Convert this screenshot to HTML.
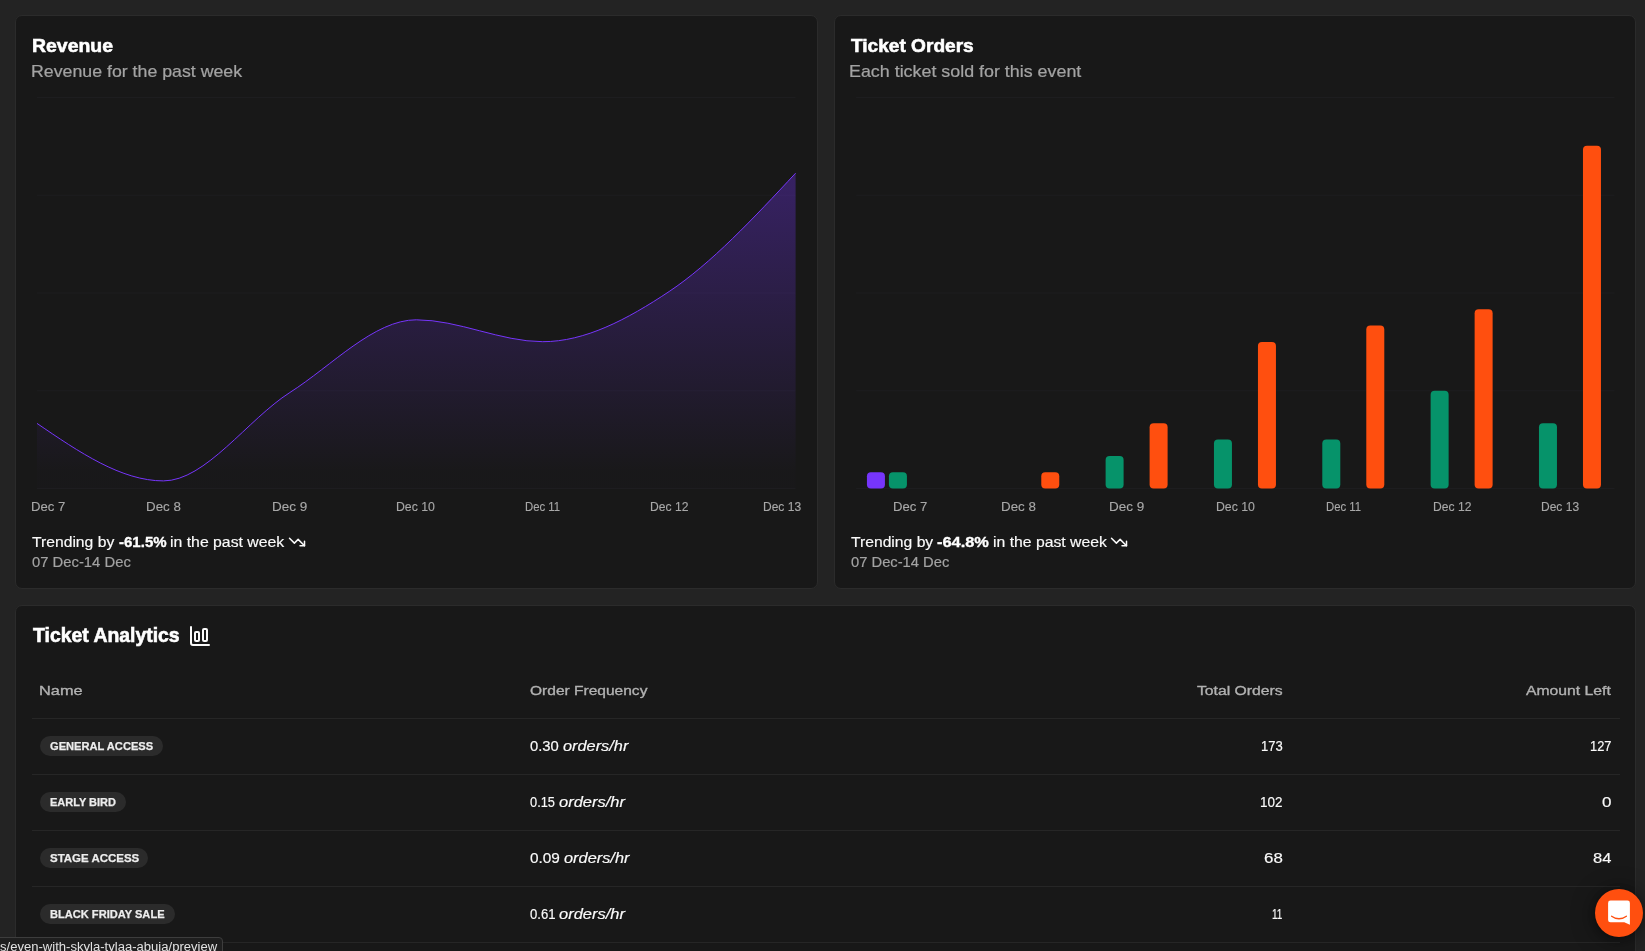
<!DOCTYPE html>
<html lang="en"><head><meta charset="utf-8"><title>Event dashboard</title>
<style>
html,body{margin:0;padding:0;background:#232323;}
body{width:1645px;height:951px;overflow:hidden;position:relative;font-family:"Liberation Sans",sans-serif;}
#app{position:absolute;left:0;top:0;width:1645px;height:951px;overflow:hidden;will-change:transform;}
.card{position:absolute;box-sizing:border-box;background:#181818;border:1px solid #2b2b2b;border-radius:7px;}
.t{position:absolute;white-space:pre;line-height:normal;transform-origin:0 0;}
.ic{position:absolute;overflow:visible}
svg.chart{position:absolute;left:0;top:0;}
.badge{position:absolute;background:#2b2b2b;border-radius:10px;}
.sep{position:absolute;left:32px;width:1587.5px;height:1px;background:#262626;}
.chat{position:absolute;left:1595px;top:889px;width:48px;height:48px;border-radius:50%;background:#ff4f0f;box-shadow:0 1px 6px rgba(0,0,0,.25),0 2px 24px rgba(0,0,0,.45);}
.status{position:absolute;left:-1px;top:936.5px;width:224px;height:20px;box-sizing:border-box;background:#1f1f1f;border:1px solid #3d3d3d;border-top-right-radius:4px;}
</style></head><body>
<div id="app">
<div class="card" style="left:15px;top:15px;width:803px;height:574px"></div>
<div class="card" style="left:834px;top:15px;width:802px;height:574px"></div>
<div class="card" style="left:15px;top:605px;width:1621px;height:420px"></div>
<svg class="chart" width="1645" height="600" viewBox="0 0 1645 600">
<defs><linearGradient id="fr" x1="0" y1="0" x2="0" y2="1"><stop offset="5%" stop-color="#7635fb" stop-opacity="0.8"/><stop offset="95%" stop-color="#7635fb" stop-opacity="0.02"/></linearGradient></defs>
<g stroke="#1d1d1f" stroke-width="1"><line x1="37" x2="795.6" y1="97.50" y2="97.50"/><line x1="37" x2="795.6" y1="195.25" y2="195.25"/><line x1="37" x2="795.6" y1="293.00" y2="293.00"/><line x1="37" x2="795.6" y1="390.75" y2="390.75"/><line x1="37" x2="795.6" y1="488.50" y2="488.50"/><line x1="856.1" x2="1614.5" y1="97.50" y2="97.50"/><line x1="856.1" x2="1614.5" y1="195.25" y2="195.25"/><line x1="856.1" x2="1614.5" y1="293.00" y2="293.00"/><line x1="856.1" x2="1614.5" y1="390.75" y2="390.75"/><line x1="856.1" x2="1614.5" y1="488.50" y2="488.50"/></g>
<path d="M37.00,423.40C79.14,452.15,121.29,480.90,163.43,480.90C205.58,480.90,247.72,419.35,289.87,392.50C332.01,365.65,374.16,319.80,416.30,319.80C458.44,319.80,500.59,341.70,542.73,341.70C584.88,341.70,627.02,319.58,669.17,291.50C711.31,263.42,753.46,218.31,795.60,173.20L795.60,488.5L37.00,488.5Z" fill="url(#fr)" fill-opacity="0.4"/>
<path d="M37.00,423.40C79.14,452.15,121.29,480.90,163.43,480.90C205.58,480.90,247.72,419.35,289.87,392.50C332.01,365.65,374.16,319.80,416.30,319.80C458.44,319.80,500.59,341.70,542.73,341.70C584.88,341.70,627.02,319.58,669.17,291.50C711.31,263.42,753.46,218.31,795.60,173.20" fill="none" stroke="#7635fb" stroke-width="1"/>
<rect x="866.93" y="472.21" width="18" height="16.29" rx="4" fill="#7635fb"/><rect x="888.93" y="472.21" width="18" height="16.29" rx="4" fill="#06936a"/><rect x="1041.27" y="472.21" width="18" height="16.29" rx="4" fill="#ff4f0f"/><rect x="1105.61" y="455.92" width="18" height="32.58" rx="4" fill="#06936a"/><rect x="1149.61" y="423.33" width="18" height="65.17" rx="4" fill="#ff4f0f"/><rect x="1213.95" y="439.62" width="18" height="48.88" rx="4" fill="#06936a"/><rect x="1257.95" y="341.88" width="18" height="146.62" rx="4" fill="#ff4f0f"/><rect x="1322.29" y="439.62" width="18" height="48.88" rx="4" fill="#06936a"/><rect x="1366.29" y="325.58" width="18" height="162.92" rx="4" fill="#ff4f0f"/><rect x="1430.63" y="390.75" width="18" height="97.75" rx="4" fill="#06936a"/><rect x="1474.63" y="309.29" width="18" height="179.21" rx="4" fill="#ff4f0f"/><rect x="1538.97" y="423.33" width="18" height="65.17" rx="4" fill="#06936a"/><rect x="1582.97" y="145.68" width="18" height="342.82" rx="4" fill="#ff4f0f"/>
</svg>
<div class="sep" style="top:717.7px"></div><div class="sep" style="top:773.8px"></div><div class="sep" style="top:829.9px"></div><div class="sep" style="top:886.0px"></div><div class="sep" style="top:942.1px"></div>
<div class="badge" style="left:40.2px;top:736.0px;width:122.7px;height:20px"></div><div class="badge" style="left:40.2px;top:792.1px;width:85.7px;height:20px"></div><div class="badge" style="left:40.2px;top:848.2px;width:108.3px;height:20px"></div><div class="badge" style="left:40.2px;top:904.3px;width:134.4px;height:20px"></div>
<span class="t" style="left:31.52px;top:36.00px;font:700 17.5px 'Liberation Sans',sans-serif;color:#ffffff;transform:scaleX(1.1097);-webkit-text-stroke:0.55px #ffffff">Revenue</span><span class="t" style="left:31.05px;top:62.20px;font:400 16.2px 'Liberation Sans',sans-serif;color:#a3a3a3;transform:scaleX(1.0963);-webkit-text-stroke:0.22px #a3a3a3">Revenue for the past week</span><span class="t" style="left:31.22px;top:499.70px;font:400 12px 'Liberation Sans',sans-serif;color:#a8a8a8;transform:scaleX(1.0931);-webkit-text-stroke:0.12px #a8a8a8">Dec 7</span><span class="t" style="left:145.56px;top:499.70px;font:400 12px 'Liberation Sans',sans-serif;color:#a8a8a8;transform:scaleX(1.1115);-webkit-text-stroke:0.12px #a8a8a8">Dec 8</span><span class="t" style="left:271.84px;top:499.70px;font:400 12px 'Liberation Sans',sans-serif;color:#a8a8a8;transform:scaleX(1.1249);-webkit-text-stroke:0.12px #a8a8a8">Dec 9</span><span class="t" style="left:396.24px;top:499.70px;font:400 12px 'Liberation Sans',sans-serif;color:#a8a8a8;transform:scaleX(1.0240);-webkit-text-stroke:0.12px #a8a8a8">Dec 10</span><span class="t" style="left:524.91px;top:499.70px;font:400 12px 'Liberation Sans',sans-serif;color:#a8a8a8;transform:scaleX(0.9461);-webkit-text-stroke:0.12px #a8a8a8">Dec 11</span><span class="t" style="left:649.55px;top:499.70px;font:400 12px 'Liberation Sans',sans-serif;color:#a8a8a8;transform:scaleX(1.0104);-webkit-text-stroke:0.12px #a8a8a8">Dec 12</span><span class="t" style="left:762.56px;top:499.70px;font:400 12px 'Liberation Sans',sans-serif;color:#a8a8a8;transform:scaleX(1.0022);-webkit-text-stroke:0.12px #a8a8a8">Dec 13</span><span class="t" style="left:32.06px;top:533.50px;font:400 14px 'Liberation Sans',sans-serif;color:#fafafa;transform:scaleX(1.1201);-webkit-text-stroke:0.16px #fafafa">Trending by</span><span class="t" style="left:118.62px;top:533.50px;font:700 14px 'Liberation Sans',sans-serif;color:#ffffff;transform:scaleX(1.0731);-webkit-text-stroke:0.3px #ffffff">-61.5%</span><span class="t" style="left:169.76px;top:533.50px;font:400 14px 'Liberation Sans',sans-serif;color:#fafafa;transform:scaleX(1.1292);-webkit-text-stroke:0.16px #fafafa">in the past week</span><span class="t" style="left:31.82px;top:553.70px;font:400 14px 'Liberation Sans',sans-serif;color:#a3a3a3;transform:scaleX(1.0579);-webkit-text-stroke:0.18px #a3a3a3">07 Dec-14 Dec</span><span class="t" style="left:851.03px;top:36.00px;font:700 17.5px 'Liberation Sans',sans-serif;color:#ffffff;transform:scaleX(1.0906);-webkit-text-stroke:0.55px #ffffff">Ticket Orders</span><span class="t" style="left:849.44px;top:62.00px;font:400 16.2px 'Liberation Sans',sans-serif;color:#a3a3a3;transform:scaleX(1.1033);-webkit-text-stroke:0.22px #a3a3a3">Each ticket sold for this event</span><span class="t" style="left:892.92px;top:499.70px;font:400 12px 'Liberation Sans',sans-serif;color:#a8a8a8;transform:scaleX(1.0931);-webkit-text-stroke:0.12px #a8a8a8">Dec 7</span><span class="t" style="left:1000.97px;top:499.70px;font:400 12px 'Liberation Sans',sans-serif;color:#a8a8a8;transform:scaleX(1.1115);-webkit-text-stroke:0.12px #a8a8a8">Dec 8</span><span class="t" style="left:1109.09px;top:499.70px;font:400 12px 'Liberation Sans',sans-serif;color:#a8a8a8;transform:scaleX(1.1249);-webkit-text-stroke:0.12px #a8a8a8">Dec 9</span><span class="t" style="left:1215.58px;top:499.70px;font:400 12px 'Liberation Sans',sans-serif;color:#a8a8a8;transform:scaleX(1.0240);-webkit-text-stroke:0.12px #a8a8a8">Dec 10</span><span class="t" style="left:1325.89px;top:499.70px;font:400 12px 'Liberation Sans',sans-serif;color:#a8a8a8;transform:scaleX(0.9461);-webkit-text-stroke:0.12px #a8a8a8">Dec 11</span><span class="t" style="left:1432.52px;top:499.70px;font:400 12px 'Liberation Sans',sans-serif;color:#a8a8a8;transform:scaleX(1.0104);-webkit-text-stroke:0.12px #a8a8a8">Dec 12</span><span class="t" style="left:1541.02px;top:499.70px;font:400 12px 'Liberation Sans',sans-serif;color:#a8a8a8;transform:scaleX(1.0022);-webkit-text-stroke:0.12px #a8a8a8">Dec 13</span><span class="t" style="left:851.11px;top:533.50px;font:400 14px 'Liberation Sans',sans-serif;color:#fafafa;transform:scaleX(1.1195);-webkit-text-stroke:0.16px #fafafa">Trending by</span><span class="t" style="left:937.19px;top:533.50px;font:700 14px 'Liberation Sans',sans-serif;color:#ffffff;transform:scaleX(1.1712);-webkit-text-stroke:0.3px #ffffff">-64.8%</span><span class="t" style="left:992.56px;top:533.50px;font:400 14px 'Liberation Sans',sans-serif;color:#fafafa;transform:scaleX(1.1252);-webkit-text-stroke:0.16px #fafafa">in the past week</span><span class="t" style="left:850.87px;top:553.70px;font:400 14px 'Liberation Sans',sans-serif;color:#a3a3a3;transform:scaleX(1.0531);-webkit-text-stroke:0.18px #a3a3a3">07 Dec-14 Dec</span><span class="t" style="left:32.65px;top:624.10px;font:700 19.7px 'Liberation Sans',sans-serif;color:#ffffff;transform:scaleX(0.9852);-webkit-text-stroke:0.6px #ffffff">Ticket Analytics</span><span class="t" style="left:39.32px;top:683.00px;font:400 13.7px 'Liberation Sans',sans-serif;color:#b2b2b2;transform:scaleX(1.1938);-webkit-text-stroke:0.35px #b2b2b2">Name</span><span class="t" style="left:530.33px;top:683.00px;font:400 13.7px 'Liberation Sans',sans-serif;color:#b2b2b2;transform:scaleX(1.1348);-webkit-text-stroke:0.35px #b2b2b2">Order Frequency</span><span class="t" style="left:1196.61px;top:683.00px;font:400 13.7px 'Liberation Sans',sans-serif;color:#b2b2b2;transform:scaleX(1.1498);-webkit-text-stroke:0.35px #b2b2b2">Total Orders</span><span class="t" style="left:1526.11px;top:683.00px;font:400 13.7px 'Liberation Sans',sans-serif;color:#b2b2b2;transform:scaleX(1.1496);-webkit-text-stroke:0.35px #b2b2b2">Amount Left</span><span class="t" style="left:49.64px;top:739.00px;font:700 11.7px 'Liberation Sans',sans-serif;color:#ededed;transform:scaleX(0.9512);-webkit-text-stroke:0.25px #ededed">GENERAL ACCESS</span><span class="t" style="left:530.36px;top:737.70px;font:400 14px 'Liberation Sans',sans-serif;color:#fafafa;transform:scaleX(1.0564);-webkit-text-stroke:0.16px #fafafa">0.30</span><span class="t" style="left:563.01px;top:737.70px;font:italic 400 14px 'Liberation Sans',sans-serif;color:#fafafa;transform:scaleX(1.1663);-webkit-text-stroke:0.16px #fafafa">orders/hr</span><span class="t" style="left:1260.74px;top:737.70px;font:400 14px 'Liberation Sans',sans-serif;color:#fafafa;transform:scaleX(0.9311);-webkit-text-stroke:0.16px #fafafa">173</span><span class="t" style="left:1589.95px;top:737.70px;font:400 14px 'Liberation Sans',sans-serif;color:#fafafa;transform:scaleX(0.9220);-webkit-text-stroke:0.16px #fafafa">127</span><span class="t" style="left:50.11px;top:795.10px;font:700 11.7px 'Liberation Sans',sans-serif;color:#ededed;transform:scaleX(0.9396);-webkit-text-stroke:0.25px #ededed">EARLY BIRD</span><span class="t" style="left:530.42px;top:793.80px;font:400 14px 'Liberation Sans',sans-serif;color:#fafafa;transform:scaleX(0.9163);-webkit-text-stroke:0.16px #fafafa">0.15</span><span class="t" style="left:559.00px;top:793.80px;font:italic 400 14px 'Liberation Sans',sans-serif;color:#fafafa;transform:scaleX(1.1788);-webkit-text-stroke:0.16px #fafafa">orders/hr</span><span class="t" style="left:1260.01px;top:793.80px;font:400 14px 'Liberation Sans',sans-serif;color:#fafafa;transform:scaleX(0.9630);-webkit-text-stroke:0.16px #fafafa">102</span><span class="t" style="left:1602.09px;top:793.80px;font:400 14px 'Liberation Sans',sans-serif;color:#fafafa;transform:scaleX(1.2156);-webkit-text-stroke:0.16px #fafafa">0</span><span class="t" style="left:49.63px;top:851.20px;font:700 11.7px 'Liberation Sans',sans-serif;color:#ededed;transform:scaleX(0.9818);-webkit-text-stroke:0.25px #ededed">STAGE ACCESS</span><span class="t" style="left:530.34px;top:849.90px;font:400 14px 'Liberation Sans',sans-serif;color:#fafafa;transform:scaleX(1.0971);-webkit-text-stroke:0.16px #fafafa">0.09</span><span class="t" style="left:563.61px;top:849.90px;font:italic 400 14px 'Liberation Sans',sans-serif;color:#fafafa;transform:scaleX(1.1681);-webkit-text-stroke:0.16px #fafafa">orders/hr</span><span class="t" style="left:1263.79px;top:849.90px;font:400 14px 'Liberation Sans',sans-serif;color:#fafafa;transform:scaleX(1.2075);-webkit-text-stroke:0.16px #fafafa">68</span><span class="t" style="left:1592.90px;top:849.90px;font:400 14px 'Liberation Sans',sans-serif;color:#fafafa;transform:scaleX(1.1804);-webkit-text-stroke:0.16px #fafafa">84</span><span class="t" style="left:50.11px;top:907.30px;font:700 11.7px 'Liberation Sans',sans-serif;color:#ededed;transform:scaleX(0.9483);-webkit-text-stroke:0.25px #ededed">BLACK FRIDAY SALE</span><span class="t" style="left:530.41px;top:906.00px;font:400 14px 'Liberation Sans',sans-serif;color:#fafafa;transform:scaleX(0.9365);-webkit-text-stroke:0.16px #fafafa">0.61</span><span class="t" style="left:559.00px;top:906.00px;font:italic 400 14px 'Liberation Sans',sans-serif;color:#fafafa;transform:scaleX(1.1788);-webkit-text-stroke:0.16px #fafafa">orders/hr</span><span class="t" style="left:1271.54px;top:906.00px;font:400 14px 'Liberation Sans',sans-serif;color:#fafafa;transform:scaleX(0.7143);-webkit-text-stroke:0.16px #fafafa">11</span>
<svg class="ic" style="left:287.9px;top:533px" width="18" height="18" viewBox="0 0 24 24" fill="none" stroke="#fafafa" stroke-width="2" stroke-linecap="round" stroke-linejoin="round"><polyline points="22 17 13.5 8.5 8.5 13.5 2 7"/><polyline points="16 17 22 17 22 11"/></svg>
<svg class="ic" style="left:1110.3px;top:533px" width="18" height="18" viewBox="0 0 24 24" fill="none" stroke="#fafafa" stroke-width="2" stroke-linecap="round" stroke-linejoin="round"><polyline points="22 17 13.5 8.5 8.5 13.5 2 7"/><polyline points="16 17 22 17 22 11"/></svg>
<svg class="ic" style="left:187.9px;top:624px" width="24" height="24" viewBox="0 0 24 24" fill="none" stroke="#fafafa" stroke-width="2" stroke-linecap="round" stroke-linejoin="round"><path d="M3 3v16a2 2 0 0 0 2 2h16"/><rect x="15" y="5" width="4" height="12" rx="1"/><rect x="7" y="8" width="4" height="9" rx="1"/></svg>
<div class="chat"><svg width="48" height="48" viewBox="0 0 48 48"><path d="M15.5 11.6h17a2.4 2.4 0 0 1 2.4 2.4v21.8l-5.6-2.5H15.5a2.4 2.4 0 0 1-2.4-2.4V14a2.4 2.4 0 0 1 2.4-2.4z" fill="#fff"/><path d="M16.6 27.2c4.4 3.4 10.4 3.4 14.8 0" fill="none" stroke="#ff4f0f" stroke-width="1.3" stroke-linecap="round"/></svg></div>
<div class="status"></div>
<span class="t" style="left:-0.24px;top:940.30px;font:400 12px 'Liberation Sans',sans-serif;color:#e2e2e2;transform:scaleX(1.0893)">s/even-with-skyla-tylaa-abuja/preview</span>
</div>
</body></html>
